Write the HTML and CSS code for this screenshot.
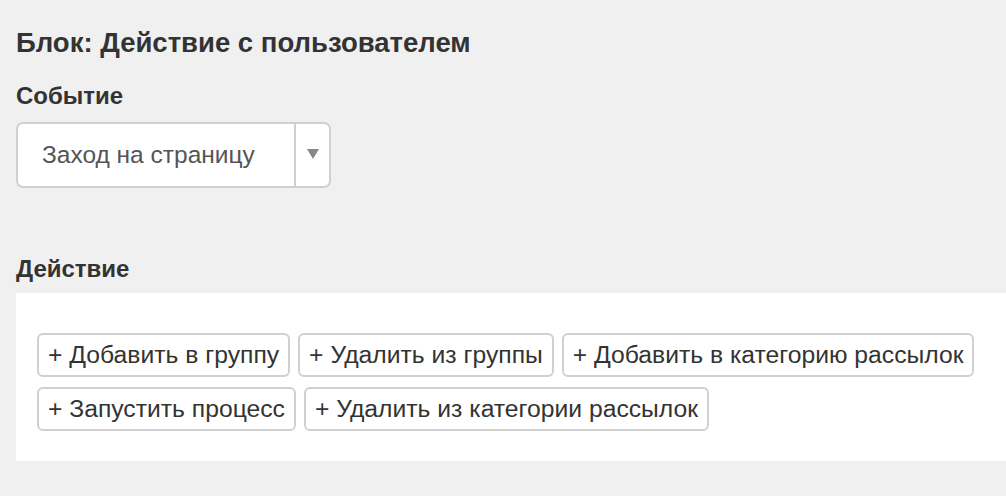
FILE: index.html
```html
<!DOCTYPE html>
<html lang="ru">
  <head>
    <meta charset="UTF-8" />
    <meta name="viewport" content="width=device-width, initial-scale=1.0" />
    <title>Блок: Действие с пользователем</title>
    <link rel="stylesheet" href="styles.css">
  </head>
  <body>
    <h2 class="block-title">Блок: Действие с пользователем</h2>

    <div class="field">
      <label class="field-label" for="event-select">Событие</label>
      <div class="select-box" id="event-select">
        <span class="select-value">Заход на страницу</span>
        <span class="select-arrow"></span>
      </div>
    </div>

    <div class="field field-actions">
      <div class="field-label">Действие</div>
      <div class="actions-panel">
        <button class="action-btn">+ Добавить в группу</button>
        <button class="action-btn">+ Удалить из группы</button>
        <button class="action-btn">+ Добавить в категорию рассылок</button>
        <button class="action-btn">+ Запустить процесс</button>
        <button class="action-btn">+ Удалить из категории рассылок</button>
      </div>
    </div>
  </body>
</html>
```

FILE: styles.css
```css
body {
  margin: 0;
  padding: 27px 0 0 16px;
  background-color: #f0f0f0;
  font-family: "Liberation Sans", Arial, sans-serif;
  color: #333;
}
.block-title {
  margin: 0;
  font-size: 27.5px;
  line-height: 32px;
  font-weight: bold;
}
.field {
  margin-top: 23px;
}
.field-label {
  display: block;
  font-size: 24px;
  line-height: 28px;
  font-weight: bold;
}
.select-box {
  display: flex;
  width: 311px;
  height: 62px;
  margin-top: 12px;
  background-color: #fff;
  border: 2px solid #d0d0d0;
  border-radius: 7px;
}
.select-value {
  flex: 1;
  display: flex;
  align-items: center;
  padding-left: 24px;
  font-size: 24.5px;
  color: #555;
  border-right: 2px solid #d0d0d0;
}
.select-arrow {
  width: 33px;
  display: flex;
  align-items: center;
  justify-content: center;
}
.select-arrow::before {
  content: "";
  border-left: 6px solid transparent;
  border-right: 6px solid transparent;
  border-top: 10px solid #888;
  margin-top: -2px;
}
.field-actions {
  margin-top: 67px;
}
.actions-panel {
  display: flex;
  flex-wrap: wrap;
  gap: 10px 8px;
  margin-top: 10px;
  padding: 40px 10px 30px 21px;
  background-color: #fff;
}
.action-btn {
  height: 44px;
  padding: 0 9px;
  background-color: #fff;
  border: 2px solid #d0d0d0;
  border-radius: 6px;
  font-family: inherit;
  font-size: 24.7px;
  color: #333;
  cursor: pointer;
}
```
